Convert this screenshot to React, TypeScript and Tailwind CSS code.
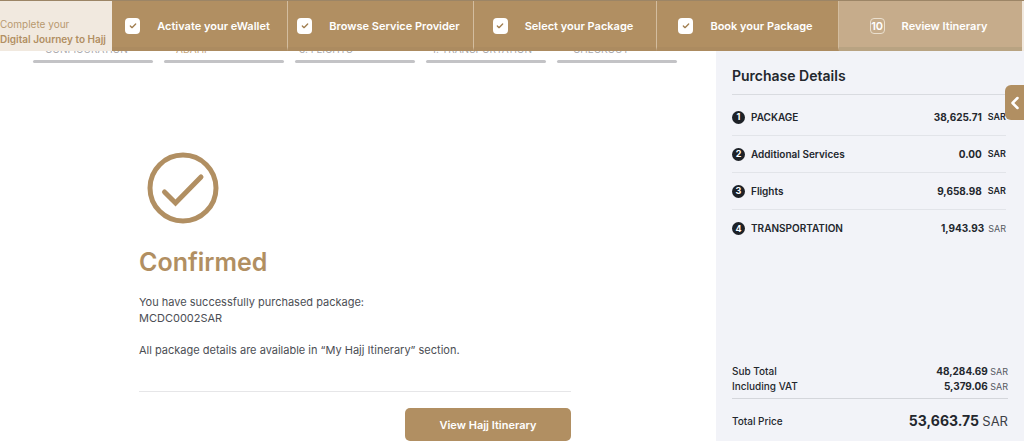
import { Check, ChevronLeft } from 'lucide-react'

const steps = ['Activate your eWallet', 'Browse Service Provider', 'Select your Package', 'Book your Package']

const tabs = [
  { label: 'CONFIGURATION', style: 'pl-3 text-[#a9a9ad]' },
  { label: 'ADAHI', style: 'pl-3 text-[#c4a47a]' },
  { label: '3. FLIGHTS', style: 'pl-1 text-[#a9a9ad]' },
  { label: '4. TRANSPORTATION', style: 'pl-1 text-[#a9a9ad]' },
  { label: 'CHECKOUT', style: 'pl-4 text-[#a9a9ad]' },
]

const items = [
  { label: 'PACKAGE', price: '38,625.71', currency: 'ml-1.5 font-semibold' },
  { label: 'Additional Services', price: '0.00', currency: 'ml-1.5 font-semibold' },
  { label: 'Flights', price: '9,658.98', currency: 'ml-1.5 font-semibold' },
  { label: 'TRANSPORTATION', price: '1,943.93', currency: 'ml-1 font-normal text-[#55585f]' },
]

function JourneyBar() {
  return (
    <header className="grid h-[51px] grid-cols-[112px_1fr] border-t border-[#9c8566] bg-[#f1e9df] pr-0.5">
      <p className="pt-4 text-[10px] leading-[15px] whitespace-nowrap text-[#b8996f]">
        Complete your
        <br />
        <span className="font-semibold text-[#b18f62]">Digital Journey to Hajj</span>
      </p>
      <ol className="grid grid-cols-[176fr_186fr_183fr_182fr_183fr] bg-[#b18f62] text-[11px] font-semibold whitespace-nowrap text-white">
        {steps.map((step) => (
          <li key={step} className="border-r border-b-4 border-r-[#d3bd9f] border-b-[#ac8b60]">
            <label className="flex h-full items-center justify-center gap-[17px] pt-1 pr-1">
              <span className="grid">
                <input
                  type="checkbox"
                  checked
                  readOnly
                  className="col-start-1 row-start-1 h-4 w-[15px] appearance-none rounded-sm bg-white"
                />
                <Check className="col-start-1 row-start-1 size-2 place-self-center text-[#a17e50]" strokeWidth={4} />
              </span>
              {step}
            </label>
          </li>
        ))}
        <li className="flex items-center justify-center gap-[17px] border-b-4 border-[#b8a382] bg-[#c6ac8b] pt-1 pr-1">
          <span className="flex h-4 w-[15px] items-center justify-center rounded-sm border border-[#eadfce]">10</span>
          Review Itinerary
        </li>
      </ol>
    </header>
  )
}

function PurchaseDetails() {
  return (
    <aside className="relative flex w-[308px] shrink-0 flex-col bg-[#f2f3f8] px-4 pb-2.5 text-[10px] text-[#23272d]">
      <h2 className="border-b border-[#d9dbe0] pt-4 pb-2.5 text-sm leading-[17px] font-semibold">Purchase Details</h2>
      <button
        type="button"
        aria-label="Open panel"
        className="absolute top-[34px] right-0 flex h-[35px] w-[19px] items-center justify-center rounded-l-md bg-[#b18f62] text-white"
      >
        <ChevronLeft className="size-5 shrink-0" strokeWidth={3} />
      </button>
      <ol className="pt-1 pr-0.5">
        {items.map((item) => (
          <li key={item.label} className="flex h-[37px] items-center border-b border-[#e2e4e9] font-bold last:border-b-0">
            <span className="mr-1.5 flex size-[13px] items-center justify-center rounded-full bg-[#1d2127] text-[9px] text-white">
              {items.indexOf(item) + 1}
            </span>
            <span className="grow font-semibold">{item.label}</span>
            <span>{item.price}</span>
            <span className={`text-[9px] ${item.currency}`}>SAR</span>
          </li>
        ))}
      </ol>
      <dl className="mt-auto grid grid-cols-[1fr_auto] leading-[14px] font-medium">
        <dt>Sub Total</dt>
        <dd className="text-right font-bold">
          48,284.69 <span className="text-[9px] font-normal text-[#55585f]">SAR</span>
        </dd>
        <dt>Including VAT</dt>
        <dd className="text-right font-bold">
          5,379.06 <span className="text-[9px] font-normal text-[#55585f]">SAR</span>
        </dd>
      </dl>
      <dl className="mt-1 flex items-center justify-between border-t border-[#d4d6db] pt-3">
        <dt className="font-medium">Total Price</dt>
        <dd className="text-sm leading-5 font-bold">
          53,663.75 <span className="text-[13px] font-normal text-[#3c4046]">SAR</span>
        </dd>
      </dl>
    </aside>
  )
}

export default function App() {
  return (
    <div className="flex min-h-screen flex-col bg-white font-['Inter',sans-serif]">
      <JourneyBar />
      <div className="flex grow">
        <main className="min-w-0 grow">
          <ul className="flex gap-[11px] pl-[33px]">
            {tabs.map((tab) => (
              <li key={tab.label} className="w-[120px]">
                <div className={`flex h-[3px] items-end overflow-hidden text-[10px] leading-[9px] whitespace-nowrap ${tab.style}`}>
                  {tab.label}
                </div>
                <div className="mt-1.5 h-[3px] rounded-full bg-[#c3c3c6]" />
              </li>
            ))}
          </ul>
          <section className="mr-[145px] ml-[139px] pt-[89px] text-[11px] leading-4 text-[#4b4e54]">
            <svg viewBox="0 0 72 72" className="ml-2 size-[72px]" fill="none" stroke="#b18f62">
              <circle cx="36" cy="36" r="33" strokeWidth="5" />
              <path d="M17.5 40 28.5 51 54 25" strokeWidth="5" strokeLinecap="round" strokeLinejoin="miter" />
            </svg>
            <h1 className="mt-5 text-[25px] leading-9 font-semibold text-[#b18f62]">Confirmed</h1>
            <p className="mt-3.5">
              You have successfully purchased package:
              <br />
              MCDC0002SAR
            </p>
            <p className="mt-4 border-b border-[#e6e6e8] pb-[33px]">
              All package details are available in “My Hajj Itinerary” section.
            </p>
            <div className="mt-4 flex justify-end">
              <button type="button" className="h-[33px] w-[166px] rounded-[5px] bg-[#b18f62] text-[11px] font-semibold text-white">
                View Hajj Itinerary
              </button>
            </div>
          </section>
        </main>
        <PurchaseDetails />
      </div>
    </div>
  )
}
